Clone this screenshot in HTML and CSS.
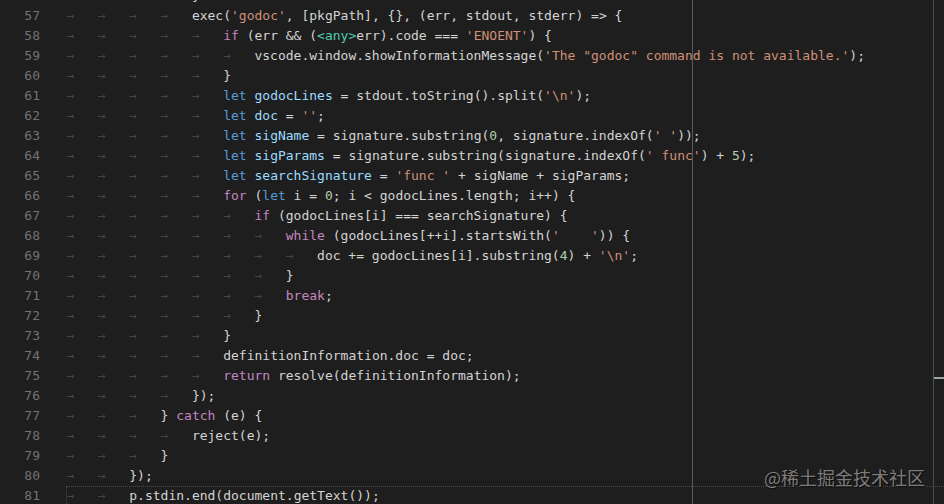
FILE: index.html
```html
<!DOCTYPE html>
<html>
<head>
<meta charset="utf-8">
<link rel="stylesheet" href="styles.css">
</head>
<body>
<div class="editor">
  <div class="lines">
    <div class="row"><span class="ln">56</span><span class="code"><i class="t">→</i><i class="t">→</i><i class="t">→</i><i class="t">→</i>}</span></div>
    <div class="row"><span class="ln">57</span><span class="code"><i class="t">→</i><i class="t">→</i><i class="t">→</i><i class="t">→</i>exec(<b class="s">'godoc'</b>, [pkgPath], {}, (err, stdout, stderr) =&gt; {</span></div>
    <div class="row"><span class="ln">58</span><span class="code"><i class="t">→</i><i class="t">→</i><i class="t">→</i><i class="t">→</i><i class="t">→</i><b class="c">if</b> (err &amp;&amp; (<b class="ty">&lt;any&gt;</b>err).code === <b class="s">'ENOENT'</b>) {</span></div>
    <div class="row"><span class="ln">59</span><span class="code"><i class="t">→</i><i class="t">→</i><i class="t">→</i><i class="t">→</i><i class="t">→</i><i class="t">→</i>vscode.window.showInformationMessage(<b class="s">'The "godoc" command is not available.'</b>);</span></div>
    <div class="row"><span class="ln">60</span><span class="code"><i class="t">→</i><i class="t">→</i><i class="t">→</i><i class="t">→</i><i class="t">→</i>}</span></div>
    <div class="row"><span class="ln">61</span><span class="code"><i class="t">→</i><i class="t">→</i><i class="t">→</i><i class="t">→</i><i class="t">→</i><b class="k">let</b> <b class="v">godocLines</b> = stdout.toString().split(<b class="s">'\n'</b>);</span></div>
    <div class="row"><span class="ln">62</span><span class="code"><i class="t">→</i><i class="t">→</i><i class="t">→</i><i class="t">→</i><i class="t">→</i><b class="k">let</b> <b class="v">doc</b> = <b class="s">''</b>;</span></div>
    <div class="row"><span class="ln">63</span><span class="code"><i class="t">→</i><i class="t">→</i><i class="t">→</i><i class="t">→</i><i class="t">→</i><b class="k">let</b> <b class="v">sigName</b> = signature.substring(<b class="n">0</b>, signature.indexOf(<b class="s">' '</b>));</span></div>
    <div class="row"><span class="ln">64</span><span class="code"><i class="t">→</i><i class="t">→</i><i class="t">→</i><i class="t">→</i><i class="t">→</i><b class="k">let</b> <b class="v">sigParams</b> = signature.substring(signature.indexOf(<b class="s">' func'</b>) + <b class="n">5</b>);</span></div>
    <div class="row"><span class="ln">65</span><span class="code"><i class="t">→</i><i class="t">→</i><i class="t">→</i><i class="t">→</i><i class="t">→</i><b class="k">let</b> <b class="v">searchSignature</b> = <b class="s">'func '</b> + sigName + sigParams;</span></div>
    <div class="row"><span class="ln">66</span><span class="code"><i class="t">→</i><i class="t">→</i><i class="t">→</i><i class="t">→</i><i class="t">→</i><b class="c">for</b> (<b class="k">let</b> i = <b class="n">0</b>; i &lt; godocLines.length; i++) {</span></div>
    <div class="row"><span class="ln">67</span><span class="code"><i class="t">→</i><i class="t">→</i><i class="t">→</i><i class="t">→</i><i class="t">→</i><i class="t">→</i><b class="c">if</b> (godocLines[i] === searchSignature) {</span></div>
    <div class="row"><span class="ln">68</span><span class="code"><i class="t">→</i><i class="t">→</i><i class="t">→</i><i class="t">→</i><i class="t">→</i><i class="t">→</i><i class="t">→</i><b class="c">while</b> (godocLines[++i].startsWith(<b class="s">'    '</b>)) {</span></div>
    <div class="row"><span class="ln">69</span><span class="code"><i class="t">→</i><i class="t">→</i><i class="t">→</i><i class="t">→</i><i class="t">→</i><i class="t">→</i><i class="t">→</i><i class="t">→</i>doc += godocLines[i].substring(<b class="n">4</b>) + <b class="s">'\n'</b>;</span></div>
    <div class="row"><span class="ln">70</span><span class="code"><i class="t">→</i><i class="t">→</i><i class="t">→</i><i class="t">→</i><i class="t">→</i><i class="t">→</i><i class="t">→</i>}</span></div>
    <div class="row"><span class="ln">71</span><span class="code"><i class="t">→</i><i class="t">→</i><i class="t">→</i><i class="t">→</i><i class="t">→</i><i class="t">→</i><i class="t">→</i><b class="c">break</b>;</span></div>
    <div class="row"><span class="ln">72</span><span class="code"><i class="t">→</i><i class="t">→</i><i class="t">→</i><i class="t">→</i><i class="t">→</i><i class="t">→</i>}</span></div>
    <div class="row"><span class="ln">73</span><span class="code"><i class="t">→</i><i class="t">→</i><i class="t">→</i><i class="t">→</i><i class="t">→</i>}</span></div>
    <div class="row"><span class="ln">74</span><span class="code"><i class="t">→</i><i class="t">→</i><i class="t">→</i><i class="t">→</i><i class="t">→</i>definitionInformation.doc = doc;</span></div>
    <div class="row"><span class="ln">75</span><span class="code"><i class="t">→</i><i class="t">→</i><i class="t">→</i><i class="t">→</i><i class="t">→</i><b class="c">return</b> resolve(definitionInformation);</span></div>
    <div class="row"><span class="ln">76</span><span class="code"><i class="t">→</i><i class="t">→</i><i class="t">→</i><i class="t">→</i>});</span></div>
    <div class="row"><span class="ln">77</span><span class="code"><i class="t">→</i><i class="t">→</i><i class="t">→</i>} <b class="c">catch</b> (e) {</span></div>
    <div class="row"><span class="ln">78</span><span class="code"><i class="t">→</i><i class="t">→</i><i class="t">→</i><i class="t">→</i>reject(e);</span></div>
    <div class="row"><span class="ln">79</span><span class="code"><i class="t">→</i><i class="t">→</i><i class="t">→</i>}</span></div>
    <div class="row"><span class="ln">80</span><span class="code"><i class="t">→</i><i class="t">→</i>});</span></div>
    <div class="row current"><span class="ln">81</span><span class="code"><i class="t">→</i><i class="t">→</i>p.stdin.end(document.getText());</span></div>
  </div>
  <div class="ruler"></div>
  <div class="overview"><div class="cursor-mark"></div></div>
  <div class="watermark">@稀土掘金技术社区</div>
</div>
</body>
</html>
```
FILE: styles.css
```css
html, body {
  margin: 0;
  padding: 0;
  background: #1e1e1e;
  overflow: hidden;
}
.editor {
  position: relative;
  width: 944px;
  height: 504px;
  overflow: hidden;
  background: #1e1e1e;
  font-family: "DejaVu Sans Mono", "Liberation Mono", monospace;
  font-size: 13px;
  color: #d4d4d4;
}
.lines {
  display: flex;
  flex-direction: column;
  margin-top: -14px;
}
.row {
  position: relative;
  display: flex;
  height: 20px;
  line-height: 20px;
  white-space: pre;
}
.ln {
  width: 40px;
  flex: none;
  text-align: right;
  color: #727272;
}
.code {
  margin-left: 26.7px;
  white-space: pre;
}
.code i, .code b {
  font-style: normal;
  font-weight: normal;
}
.t {
  display: inline-block;
  width: 4ch;
  color: #444444;
}
.k { color: #569cd6; }
.c { color: #c586c0; }
.s { color: #ce9178; }
.n { color: #b5cea8; }
.v { color: #9cdcfe; }
.ty { color: #4ec9b0; }
.current::before {
  content: "";
  position: absolute;
  left: 66px;
  right: 0;
  top: 0;
  bottom: -4px;
  border-top: 1px dotted #4a4a4a;
  border-left: 1px dotted #4a4a4a;
  pointer-events: none;
}
.ruler {
  position: absolute;
  left: 692px;
  top: 0;
  bottom: 0;
  width: 1px;
  background: #5a5a5a;
}
.overview {
  position: absolute;
  left: 933px;
  top: 0;
  bottom: 0;
  right: 0;
  border-left: 1px solid #4f4f4f;
}
.cursor-mark {
  position: absolute;
  left: 0;
  right: 0;
  top: 377px;
  height: 2px;
  background: #9aa6a8;
}
.watermark {
  position: absolute;
  right: 19px;
  top: 464px;
  font-family: "Noto Sans CJK SC", "Noto Sans", sans-serif;
  font-size: 18px;
  line-height: 26px;
  color: #7c7c7c;
  text-shadow: 1px 1px 1px #0a0a0a;
}
```
